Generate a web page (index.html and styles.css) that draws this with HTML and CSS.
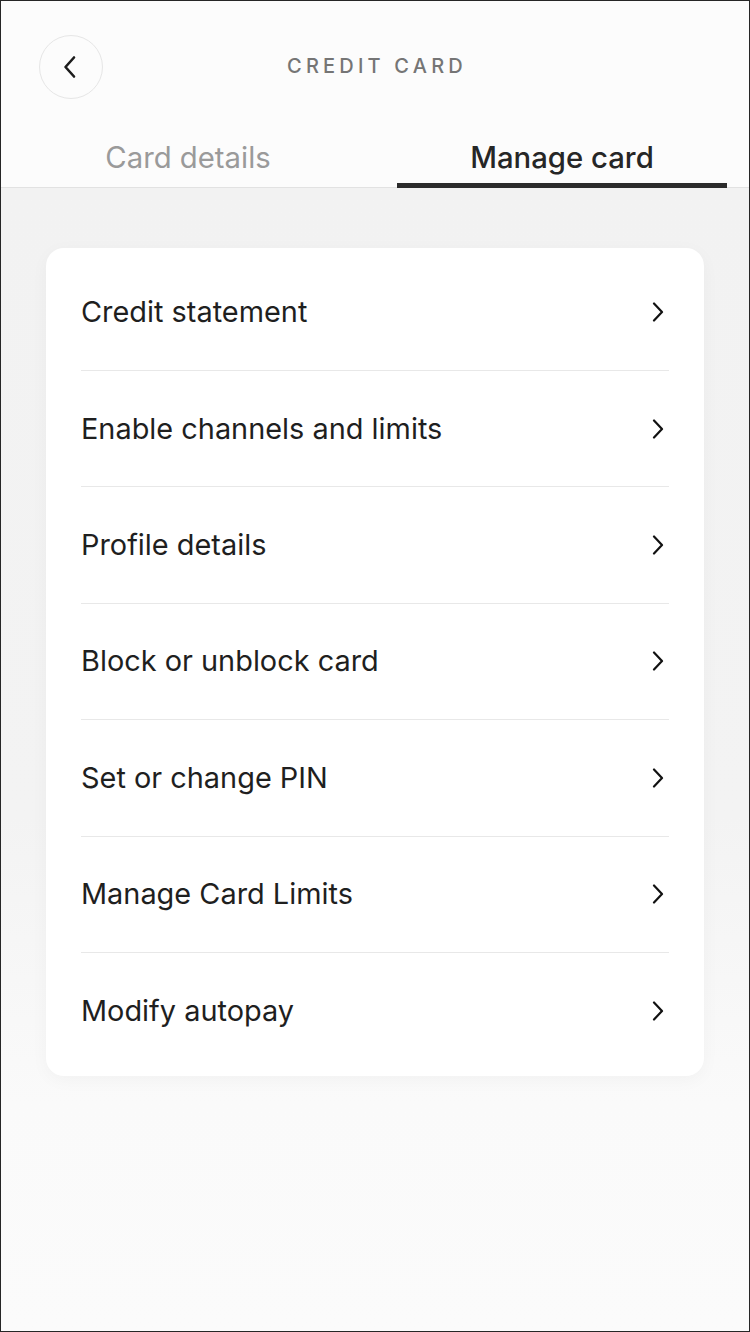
FILE: index.html
```html
<!DOCTYPE html>
<html lang="en">
<head>
<meta charset="utf-8">
<title>Credit card</title>
<link rel="stylesheet" href="styles.css">
</head>
<body>
<div class="screen">
  <header class="header">
    <div class="topbar">
      <button class="back" aria-label="Back">
        <svg width="14" height="24" viewBox="0 0 14 24"><path d="M11 2.5 L2.5 12 L11 21.5" fill="none" stroke="#1c1c1c" stroke-width="2.6" stroke-linecap="round" stroke-linejoin="round"/></svg>
      </button>
      <h1 class="title">CREDIT CARD</h1>
      <span class="spacer"></span>
    </div>
    <nav class="tabs">
      <div class="tab">Card details</div>
      <div class="tab active">Manage card</div>
    </nav>
  </header>
  <main class="content">
    <ul class="card">
      <li class="row"><span>Credit statement</span><svg class="chev" width="12" height="20" viewBox="0 0 12 20"><path d="M2 1.5 L10 10 L2 18.5" fill="none" stroke="#111" stroke-width="2.2" stroke-linecap="round" stroke-linejoin="round"/></svg></li>
      <li class="row"><span>Enable channels and limits</span><svg class="chev" width="12" height="20" viewBox="0 0 12 20"><path d="M2 1.5 L10 10 L2 18.5" fill="none" stroke="#111" stroke-width="2.2" stroke-linecap="round" stroke-linejoin="round"/></svg></li>
      <li class="row"><span>Profile details</span><svg class="chev" width="12" height="20" viewBox="0 0 12 20"><path d="M2 1.5 L10 10 L2 18.5" fill="none" stroke="#111" stroke-width="2.2" stroke-linecap="round" stroke-linejoin="round"/></svg></li>
      <li class="row"><span>Block or unblock card</span><svg class="chev" width="12" height="20" viewBox="0 0 12 20"><path d="M2 1.5 L10 10 L2 18.5" fill="none" stroke="#111" stroke-width="2.2" stroke-linecap="round" stroke-linejoin="round"/></svg></li>
      <li class="row"><span>Set or change PIN</span><svg class="chev" width="12" height="20" viewBox="0 0 12 20"><path d="M2 1.5 L10 10 L2 18.5" fill="none" stroke="#111" stroke-width="2.2" stroke-linecap="round" stroke-linejoin="round"/></svg></li>
      <li class="row"><span>Manage Card Limits</span><svg class="chev" width="12" height="20" viewBox="0 0 12 20"><path d="M2 1.5 L10 10 L2 18.5" fill="none" stroke="#111" stroke-width="2.2" stroke-linecap="round" stroke-linejoin="round"/></svg></li>
      <li class="row"><span>Modify autopay</span><svg class="chev" width="12" height="20" viewBox="0 0 12 20"><path d="M2 1.5 L10 10 L2 18.5" fill="none" stroke="#111" stroke-width="2.2" stroke-linecap="round" stroke-linejoin="round"/></svg></li>
    </ul>
  </main>
</div>
</body>
</html>
```
FILE: styles.css
```css
* { box-sizing: border-box; }
html, body { margin: 0; padding: 0; }
body { font-family: Inter, "Noto Sans", sans-serif; color: #222; }
.screen {
  width: 750px;
  height: 1332px;
  border: 1px solid #262626;
  display: flex;
  flex-direction: column;
  background: #fafafa;
  overflow: hidden;
}
.header {
  background: #fcfcfc;
  border-bottom: 1px solid #e2e2e2;
}
.topbar {
  height: 130px;
  display: flex;
  align-items: center;
  padding: 0 0 0 38px;
}
.back {
  width: 64px;
  height: 64px;
  border-radius: 50%;
  border: 1.5px solid #e6e6e6;
  background: #fcfcfc;
  display: flex;
  align-items: center;
  justify-content: center;
  padding: 0 2px 0 0;
  margin-top: 2px;
}
.title {
  flex: 1;
  margin: 0;
  text-align: center;
  font-size: 20px;
  font-weight: 500;
  letter-spacing: 4.2px;
  color: #757575;
  margin-left: -100px;
  padding-left: 2px;
}
.spacer { width: 0; }
.tabs {
  display: flex;
  height: 56px;
}
.tab {
  flex: 1;
  display: flex;
  align-items: flex-start;
  justify-content: center;
  font-size: 29.3px;
  color: #9a9a9a;
  padding-top: 9px;
  position: relative;
}
.tab.active {
  color: #262626;
  font-weight: 500;
}
.tab.active::after {
  content: "";
  position: absolute;
  left: 22px;
  right: 22px;
  bottom: -1px;
  height: 5px;
  background: #2b2b2b;
}
.content {
  flex: 1;
  padding: 60px 45px 0 45px;
  background: linear-gradient(#f2f2f2 0%, #f3f3f3 55%, #fafafa 80%, #fbfbfb 100%);
}
.card {
  list-style: none;
  margin: 0;
  padding: 6.6px 35px;
  background: #fff;
  border-radius: 18px;
  box-shadow: 0 4px 18px rgba(0, 0, 0, 0.035);
}
.row {
  height: 116.4px;
  display: flex;
  align-items: center;
  justify-content: space-between;
  font-size: 28.9px;
  color: #1f1f1f;
  border-bottom: 1px solid #e8e8e8;
}
.row > span { margin-top: -1px; }
.row:last-child { border-bottom: none; height: 116px; }
.chev { margin-right: 5px; margin-top: 0; }
```
